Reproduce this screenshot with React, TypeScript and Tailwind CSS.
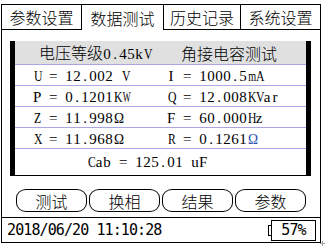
import React from "react";

const zh = "font-['Noto_Sans_CJK_SC',sans-serif] font-light text-[16px] tracking-[0px]";

const wide = "UKVHQXCRAZ";

function cls(c: string) {
  if (c === "m") return "inline-block w-[8px] text-center scale-x-[0.68]";
  if (c === "W") return "inline-block w-[8px] text-center scale-x-[0.56]";
  if (wide.includes(c)) return "inline-block w-[8px] text-center scale-x-[0.78]";
  return "inline-block w-[8px] text-center";
}

function M({ t }: { t: string }) {
  return (
    <span className="font-['Liberation_Serif',serif] text-[15px] whitespace-pre">
      {t.split("").map((c, i) =>
        c === "Ω" ? (
          <span key={i} className="inline-block w-[12px] text-center text-[15px] scale-x-[0.9]">
            Ω
          </span>
        ) : c === "@" ? (
          <span key={i} className="inline-block w-[12px] text-center text-[15px] scale-x-[0.9] text-[#2a4fb0]">
            Ω
          </span>
        ) : (
          <span key={i} className={cls(c)}>
            {c}
          </span>
        )
      )}
    </span>
  );
}

function Row({ l, r }: { l: string; r: string }) {
  return (
    <div className="h-[21px] border-b border-[#aaa6e6] grid grid-cols-[134px_1fr] pl-[18px] items-center leading-none">
      <div>
        <M t={l} />
      </div>
      <div>
        <M t={r} />
      </div>
    </div>
  );
}

export default function App() {
  const tabBase = "h-[26px] border-t border-l border-black flex items-center justify-center leading-none " + zh;
  return (
    <div className="w-[326px] h-[246px] bg-white relative text-black font-['Noto_Sans_CJK_SC',sans-serif]">
      <div className="ml-[1px] w-[320px]">
        <div className="flex pt-[4px] h-[30px]">
          <div className={`${tabBase} w-[80px] border-b`}>参数设置</div>
          <div className={`${tabBase} w-[82px]`}>数据测试</div>
          <div className={`${tabBase} w-[77px] border-b`}>历史记录</div>
          <div className={`${tabBase} w-[81px] border-b border-r`}>系统设置</div>
        </div>
        <div className="h-[213px] border-l border-r border-b border-black flex flex-col pt-[11px]">
          <div className="ml-[8px] w-[301px] h-[135px] border-l-[5px] border-r-[5px] border-b border-black flex flex-col">
            <div className="h-[24px] bg-[#e0e0e0] border-b border-[#aaa6e6] grid grid-cols-[142px_1fr] pl-[24px] items-center leading-none">
              <div className="whitespace-nowrap">
                <span className={zh}>电压等级</span>
                <M t="0.45kV" />
              </div>
              <div className={zh}>角接电容测试</div>
            </div>
            <Row l="U = 12.002 V" r="I = 1000.5mA" />
            <Row l="P = 0.1201KW" r="Q = 12.008KVar" />
            <Row l="Z = 11.998Ω" r="F = 60.000Hz" />
            <Row l="X = 11.968Ω" r="R = 0.1261@" />
            <div className="flex-1 flex items-center pl-[72px] leading-none">
              <M t="Cab = 125.01 uF" />
            </div>
          </div>
          <div className="mt-[13px] ml-[14px] flex gap-[2px]">
            {["测试", "换相", "结果", "参数"].map((t) => (
              <div
                key={t}
                className={`w-[71px] h-[23px] border border-black rounded-[10px/9px] flex items-center justify-center leading-none ${zh}`}
              >
                {t}
              </div>
            ))}
          </div>
          <div className="mt-[5px] border-t border-black h-[25px] flex items-center justify-between pl-[5px] pr-[4px]">
            <div className="font-['DejaVu_Sans_Mono',monospace] font-light text-[15px] tracking-[-0.9px] leading-none">
              2018/06/20 11:10:28
            </div>
            <div className="flex items-center">
              <div className="w-[3px] h-[11px] border border-r-0 border-black"></div>
              <div className="w-[45px] h-[21px] border border-black flex items-center justify-center font-['DejaVu_Sans_Mono',monospace] font-light text-[15px] tracking-[-0.9px] leading-none">
                57%
              </div>
            </div>
          </div>
        </div>
      </div>
      <svg className="absolute left-[320px] top-[241px]" width="5" height="5" viewBox="0 0 5 5">
        <path d="M2.5 0V5M0 2.5H5" stroke="#a0a0a0" strokeWidth="1" />
      </svg>
    </div>
  );
}
